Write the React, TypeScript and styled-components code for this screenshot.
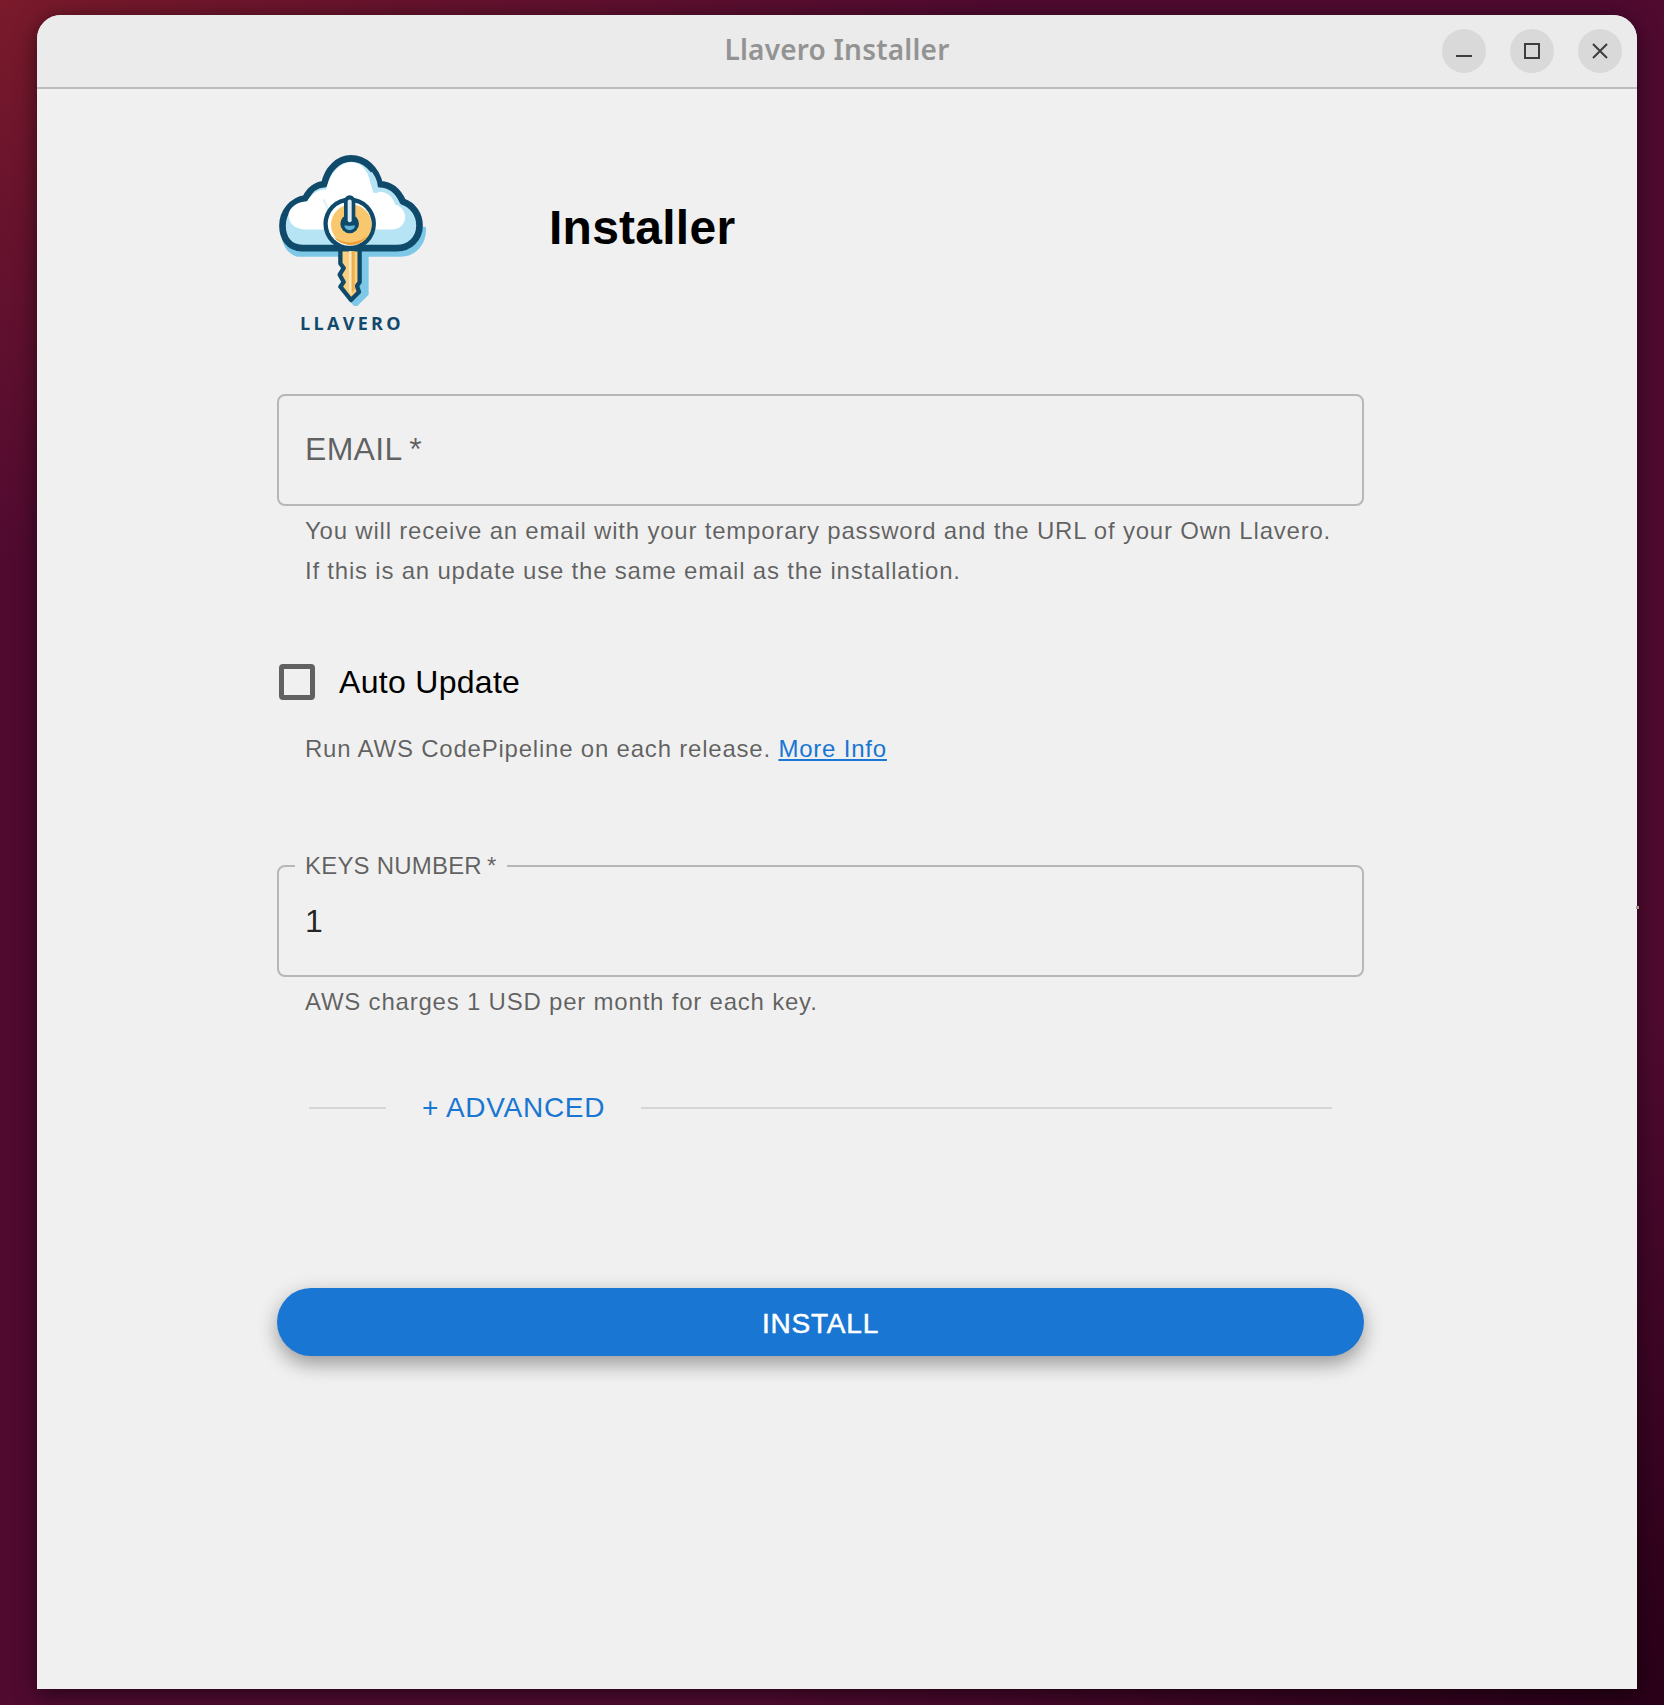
import React from 'react'
import styled, { createGlobalStyle } from 'styled-components'

const GlobalStyle = createGlobalStyle`
  html, body {
    margin: 0;
    padding: 0;
  }
  body {
    width: 1664px;
    height: 1705px;
    overflow: hidden;
    background:
      radial-gradient(ellipse 1000px 560px at 0% 0%, #7a1a2b 0%, rgba(122, 26, 43, 0.55) 40%, rgba(122, 26, 43, 0) 100%),
      radial-gradient(ellipse 900px 700px at 100% 100%, #2a0018 0%, rgba(42, 0, 24, 0) 100%),
      #500a30;
    font-family: "Liberation Sans", Arial, sans-serif;
  }
`

const Desktop = styled.div`
  padding: 15px 27px 16px 37px;
`

const Window = styled.div`
  position: relative;
  width: 1600px;
  height: 1674px;
  display: flex;
  flex-direction: column;
  background: #f0f0f0;
  border-radius: 24px 24px 0 0;
  box-shadow: 0 4px 22px rgba(0, 0, 0, 0.55);
`

const EdgeMark = styled.div`
  position: absolute;
  left: 1599px;
  top: 891px;
  width: 3px;
  height: 3px;
  background: #a89a8c;
`

const TitleBar = styled.header`
  position: relative;
  height: 72px;
  flex: none;
  display: flex;
  align-items: center;
  justify-content: flex-end;
  gap: 24px;
  padding: 0 15px;
  background: #ebebeb;
  border-bottom: 2px solid #bdbdbd;
  border-radius: 24px 24px 0 0;
`

const WindowTitle = styled.div`
  position: absolute;
  left: 0;
  right: 0;
  top: 16px;
  text-align: center;
  font-family: "Noto Sans", sans-serif;
  font-weight: 600;
  font-size: 28px;
  line-height: 36px;
  letter-spacing: 0.2px;
  color: #939393;
`

const WindowButton = styled.div`
  width: 44px;
  height: 44px;
  border-radius: 50%;
  background: #d9d9d9;
  display: flex;
  align-items: center;
  justify-content: center;
`

const Main = styled.main`
  padding: 64px 0 0 240px;
`

const Content = styled.div`
  width: 1087px;
`

const Header = styled.div`
  display: flex;
  align-items: flex-start;
  gap: 122px;
  height: 241px;
`

const LogoBlock = styled.div`
  width: 150px;
  display: flex;
  flex-direction: column;
  align-items: center;
`

const LogoWord = styled.div`
  margin-top: 7px;
  font-family: "Open Sans", sans-serif;
  font-weight: 700;
  font-size: 18px;
  line-height: 20px;
  letter-spacing: 3.3px;
  color: #124a6e;
`

const PageTitle = styled.h1`
  margin: 45px 0 0;
  font-size: 48px;
  line-height: 60px;
  font-weight: 700;
  letter-spacing: 0.25px;
  color: #000;
`

const FieldBox = styled.fieldset`
  box-sizing: border-box;
  height: 112px;
  margin: 0;
  padding: 0 26px 1px;
  display: flex;
  align-items: center;
  border: 2px solid #b7b7b7;
  border-radius: 8px;
  min-width: 0;
`

const NotchedBox = styled(FieldBox)`
  margin-top: 83px;
  height: 125px;
  padding-bottom: 12px;
`

const Notch = styled.legend`
  margin-left: -10px;
  padding: 0 11px 0 10px;
  font-size: 24px;
  line-height: 28px;
  color: rgba(0, 0, 0, 0.6);
  letter-spacing: 0.2px;
`

const Placeholder = styled.span`
  font-size: 32px;
  letter-spacing: 0.3px;
  color: rgba(0, 0, 0, 0.6);
`

const Value = styled.span`
  font-size: 32px;
  letter-spacing: 0.3px;
  color: rgba(0, 0, 0, 0.87);
`

const Helper = styled.p<{ $top: number }>`
  margin: ${p => p.$top}px 0 0;
  padding-left: 28px;
  font-size: 24px;
  line-height: 40px;
  letter-spacing: 0.79px;
  color: rgba(0, 0, 0, 0.6);
`

const MoreInfo = styled.a`
  color: #1976d2;
  text-decoration: underline;
`

const CheckRow = styled.label`
  margin-top: 73px;
  display: flex;
  align-items: center;
  gap: 24px;
  height: 36px;
  padding-left: 2px;
  font-size: 32px;
  letter-spacing: 0.3px;
  color: #000;
`

const CheckBox = styled.span`
  box-sizing: border-box;
  width: 36px;
  height: 36px;
  border: 5px solid #616161;
  border-radius: 4px;
`

const Divider = styled.div`
  margin: 66px 32px 0;
  display: flex;
  align-items: center;
  gap: 36px;
`

const DividerLine = styled.div<{ $grow?: boolean }>`
  height: 2px;
  background: #d6d6d6;
  flex: ${p => (p.$grow ? '1' : '0 0 77px')};
`

const AdvancedLink = styled.span`
  font-size: 28px;
  line-height: 40px;
  letter-spacing: 0.7px;
  color: #1976d2;
`

const InstallButton = styled.button`
  display: block;
  width: 100%;
  height: 68px;
  margin-top: 160px;
  padding: 3px 0 0;
  border: 0;
  border-radius: 34px;
  background: #1976d2;
  color: #fff;
  font-family: inherit;
  font-size: 28px;
  font-weight: 400;
  letter-spacing: 0.8px;
  -webkit-text-stroke: 0.5px #fff;
  box-shadow: 0 10px 20px -2px rgba(0, 0, 0, 0.28), 0 4px 22px rgba(0, 0, 0, 0.14);
`

const Logo = () => (
  <svg width="150" height="153" viewBox="50 40 450 460">
    {/* drop shadow of the cloud and the key */}
    <path
      d="M110 352 C70 340 60 300 62 262 L497 262 C502 310 470 352 420 352 L325 352 L325 466 L286 505 L262 480 L262 352 Z"
      fill="#7cc8e6"
    />
    {/* cloud */}
    <path
      d="M125 326 C85 326 66 295 66 258 C66 218 95 182 135 176 C148 150 170 134 192 134 C200 88 235 56 272 56 C312 56 348 88 358 134 C392 134 415 158 428 186 C458 196 478 225 478 258 C478 298 448 326 410 326 Z"
      fill="#b6e4f4"
      stroke="#0f4a6b"
      strokeWidth="20"
      strokeLinejoin="round"
    />
    <path
      d="M130 270 C100 268 84 248 84 226 C86 204 110 186 140 186 C152 164 172 150 198 150 C205 105 240 68 272 68 C300 68 322 88 330 130 L340 160 C372 148 398 170 405 195 C425 200 438 220 434 240 C430 258 415 270 395 270 Z"
      fill="#ffffff"
    />
    <path d="M188 180 C204 200 206 225 194 246" fill="none" stroke="#dff2f9" strokeWidth="7" />
    <path d="M330 100 C345 120 350 140 346 160" fill="none" stroke="#b6e4f4" strokeWidth="12" />
    {/* key blade */}
    <path
      d="M240 330 L240 372 L250 386 L238 406 L250 428 L240 442 L272 482 L296 458 L290 440 L298 428 L298 330 Z"
      fill="#f9cf82"
      stroke="#0f4a6b"
      strokeWidth="13"
      strokeLinejoin="round"
    />
    <path d="M266 335 L274 335 L274 466 L266 456 Z" fill="#fde9bd" />
    <path d="M274 335 L283 335 L283 450 L274 462 Z" fill="#eeb04e" />
    {/* key bow */}
    <circle cx="268" cy="253" r="79" fill="#0f4a6b" />
    <circle cx="268" cy="253" r="66" fill="#ffffff" />
    <circle cx="273" cy="256" r="61" fill="#f9c76e" />
    <path d="M218 290 A64 64 0 0 0 325 285 A70 60 0 0 1 218 290 Z" fill="#ec9f36" />
    {/* hanger */}
    <circle cx="268" cy="253" r="28" fill="#0f4a6b" />
    <path d="M252 258 A16 14 0 0 0 284 258 Z" fill="#5fb4d8" />
    <rect x="251" y="167" width="34" height="92" rx="17" fill="#0f4a6b" />
    <rect x="262" y="180" width="12" height="68" rx="6" fill="#dcecf3" />
  </svg>
)

const App = () => (
  <Desktop>
    <GlobalStyle />
    <Window>
      <EdgeMark />
      <TitleBar>
        <WindowTitle>Llavero Installer</WindowTitle>
        <WindowButton>
          <svg width="16" height="16" viewBox="0 0 16 16">
            <path d="M0 13h16" stroke="#3d3d3d" strokeWidth="2" />
          </svg>
        </WindowButton>
        <WindowButton>
          <svg width="16" height="16" viewBox="0 0 16 16" fill="none">
            <rect x="1" y="1" width="14" height="14" stroke="#3d3d3d" strokeWidth="2" />
          </svg>
        </WindowButton>
        <WindowButton>
          <svg width="16" height="16" viewBox="0 0 16 16">
            <path d="M1 1l14 14M15 1L1 15" stroke="#3d3d3d" strokeWidth="2" />
          </svg>
        </WindowButton>
      </TitleBar>
      <Main>
        <Content>
          <Header>
            <LogoBlock>
              <Logo />
              <LogoWord>LLAVERO</LogoWord>
            </LogoBlock>
            <PageTitle>Installer</PageTitle>
          </Header>

          <FieldBox>
            <Placeholder>EMAIL{'\u2009'}*</Placeholder>
          </FieldBox>
          <Helper $top={5}>
            You will receive an email with your temporary password and the URL of your Own Llavero.
            <br />
            If this is an update use the same email as the installation.
          </Helper>

          <CheckRow>
            <CheckBox />
            Auto Update
          </CheckRow>
          <Helper $top={29}>
            Run AWS CodePipeline on each release. <MoreInfo>More Info</MoreInfo>
          </Helper>

          <NotchedBox>
            <Notch>KEYS NUMBER{'\u2009'}*</Notch>
            <Value>1</Value>
          </NotchedBox>
          <Helper $top={5}>AWS charges 1 USD per month for each key.</Helper>

          <Divider>
            <DividerLine />
            <AdvancedLink>+ ADVANCED</AdvancedLink>
            <DividerLine $grow />
          </Divider>

          <InstallButton>INSTALL</InstallButton>
        </Content>
      </Main>
    </Window>
  </Desktop>
)

export default App
